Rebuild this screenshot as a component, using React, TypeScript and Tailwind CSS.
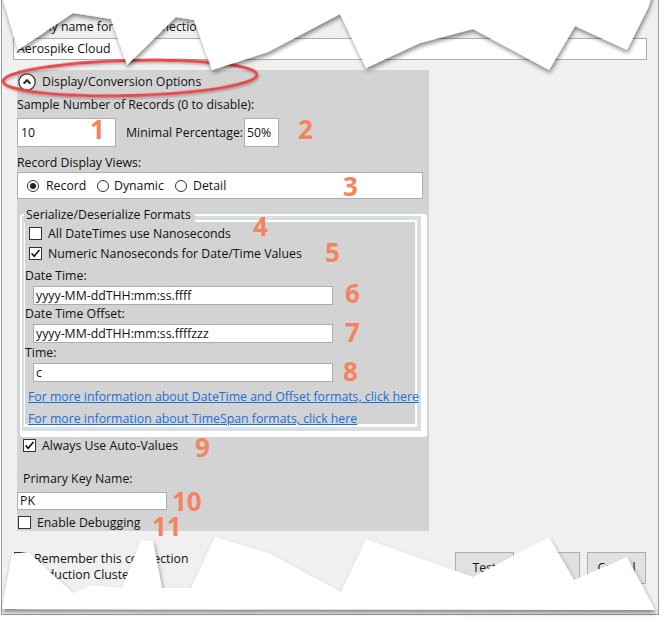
import React from "react";

const Check = ({ checked, className = "" }: { checked?: boolean; className?: string }) => (
  <span className={`flex h-[13px] w-[13px] shrink-0 items-center justify-center border border-[#333] bg-white ${className}`}>
    {checked && (
      <svg width="11" height="11" viewBox="0 0 11 11">
        <path d="M1.6 5.4 L4.2 8.2 L9.4 2" fill="none" stroke="#111" strokeWidth="1.6" />
      </svg>
    )}
  </span>
);

const Radio = ({ checked }: { checked?: boolean }) => (
  <span className="flex h-[12px] w-[12px] shrink-0 items-center justify-center rounded-full border border-[#333] bg-white">
    {checked && <span className="h-[6px] w-[6px] rounded-full bg-[#222]" />}
  </span>
);

const TextBox = ({ value, className = "" }: { value: string; className?: string }) => (
  <div className={`flex items-center border border-[#abadb3] bg-white ${className}`}>{value}</div>
);

// orange callout numbers drawn over the dialog
const CALLOUTS = [
  { n: "1", left: 90, top: 119 },
  { n: "2", left: 298, top: 119 },
  { n: "3", left: 343, top: 176 },
  { n: "4", left: 253, top: 216 },
  { n: "5", left: 325, top: 242 },
  { n: "6", left: 345, top: 283 },
  { n: "7", left: 345, top: 322 },
  { n: "8", left: 343, top: 361 },
  { n: "9", left: 195, top: 437 },
  { n: "10", left: 172, top: 491 },
  { n: "11", left: 152, top: 516 },
];

export default function App() {
  return (
    <div className="relative h-[619px] w-[660px] overflow-hidden bg-white font-['Open_Sans',sans-serif] text-[12.3px] leading-[14px] text-[#111]">
      {/* WINDOW */}
      <div className="ml-px flex h-[615px] w-[658px] flex-col border-x border-b border-[#9b9b9b] bg-[#f0f0f0]">
        <div className="ml-[10px] mt-[20px] h-[14px]">Friendly name for this connection</div>
        <TextBox value="Aerospike Cloud" className="ml-[11px] mt-[4px] h-[22px] w-[634px] pl-[3px]" />

        {/* OPTIONS PANEL */}
        <div className="ml-[15px] mt-[10px] flex h-[461px] w-[412px] flex-col bg-[#d3d3d3]">
          <div className="mt-[2px] flex h-[20px] items-center">
            <svg className="ml-[1px]" width="18" height="18" viewBox="0 0 18 18">
              <circle cx="9" cy="9" r="8.2" fill="#fff" stroke="#3a3a3a" strokeWidth="1.3" />
              <path d="M5.6 10.6 L9 7.2 L12.4 10.6" fill="none" stroke="#222" strokeWidth="2" />
            </svg>
            <span className="ml-[6px]">Display/Conversion Options</span>
          </div>

          <div className="mt-[6px] h-[14px]">Sample Number of Records (0 to disable):</div>
          <div className="mt-[6px] flex h-[29px] items-center">
            <TextBox value="10" className="h-[29px] w-[99px] pl-[3px]" />
            <span className="ml-[10px] w-[118px]">Minimal Percentage:</span>
            <TextBox value="50%" className="h-[29px] w-[35px] pl-[2px]" />
          </div>

          <div className="mt-[9px] h-[14px]">Record Display Views:</div>
          <div className="mt-[2px] flex h-[27px] w-[406px] items-center border border-[#abadb3] bg-white pl-[9px]">
            <div className="flex w-[70px] items-center">
              <Radio checked />
              <span className="ml-[7px]">Record</span>
            </div>
            <div className="flex w-[78px] items-center">
              <Radio />
              <span className="ml-[5px]">Dynamic</span>
            </div>
            <div className="flex items-center">
              <Radio />
              <span className="ml-[6px]">Detail</span>
            </div>
          </div>

          {/* GROUPBOX */}
          <div className="relative ml-[3px] mt-[15px] h-[223px] w-[407px]">
            <div className="absolute left-[4px] top-[-7px] z-10 h-[16px] bg-[#d3d3d3] pl-[2px] pr-[4px] leading-[16px]">
              Serialize/Deserialize Formats
            </div>
            <div className="h-full rounded-[3px] border-b-[6px] border-l-2 border-r-[6px] border-t-2 border-white">
              <div className="h-full rounded-[2px] border-b-4 border-l-2 border-r-4 border-t-4 border-[#d5dfe5]">
                <div className="flex h-full flex-col border-b-[3px] border-l border-r-2 border-t-2 border-white bg-[#d3d3d3]">
                  <div className="ml-[4px] mt-[5px] flex h-[13px] items-center">
                    <Check />
                    <span className="ml-[6px]">All DateTimes use Nanoseconds</span>
                  </div>
                  <div className="ml-[4px] mt-[7px] flex h-[13px] items-center">
                    <Check checked />
                    <span className="ml-[6px]">Numeric Nanoseconds for Date/Time Values</span>
                  </div>
                  <div className="mt-[9px] h-[14px]">Date Time:</div>
                  <TextBox value="yyyy-MM-ddTHH:mm:ss.ffff" className="ml-[8px] mt-[3px] h-[19px] w-[300px] shrink-0 pl-[2px]" />
                  <div className="mt-[2px] h-[14px]">Date Time Offset:</div>
                  <TextBox value="yyyy-MM-ddTHH:mm:ss.ffffzzz" className="ml-[8px] mt-[3px] h-[19px] w-[300px] shrink-0 pl-[2px]" />
                  <div className="mt-[3px] h-[14px]">Time:</div>
                  <TextBox value="c" className="ml-[8px] mt-[3px] h-[19px] w-[300px] shrink-0 pl-[2px]" />
                  <a className="ml-[3px] mt-[8px] h-[14px] shrink-0 whitespace-nowrap text-[#1b6fd6] underline">
                    For more information about DateTime and Offset formats, click here
                  </a>
                  <a className="ml-[3px] mt-[8px] h-[14px] shrink-0 whitespace-nowrap text-[#1b6fd6] underline">
                    For more information about TimeSpan formats, click here
                  </a>
                </div>
              </div>
            </div>
          </div>

          <div className="ml-[6px] mt-[2px] flex h-[13px] items-center">
            <Check checked />
            <span className="ml-[6px]">Always Use Auto-Values</span>
          </div>
          <div className="ml-[6px] mt-[20px] h-[14px]">Primary Key Name:</div>
          <TextBox value="PK" className="mt-[6px] h-[18px] w-[150px] pl-[2px]" />
          <div className="ml-[1px] mt-[6px] flex h-[13px] items-center">
            <Check />
            <span className="ml-[6px]">Enable Debugging</span>
          </div>
        </div>

        {/* FOOTER */}
        <div className="mt-[21px] flex">
          <div className="ml-[12px] flex flex-col">
            <div className="flex h-[13px] items-center">
              <Check />
              <span className="ml-[7px]">Remember this connection</span>
            </div>
            <div className="ml-[13px] mt-[3px] h-[14px]">Production Cluster</div>
          </div>
          <div className="ml-auto mr-[12px] flex gap-[7px]">
            {["Test", "OK", "Cancel"].map((b) => (
              <div key={b} className="flex h-[32px] w-[59px] items-center justify-center border border-[#adadad] bg-[#e1e1e1]">
                {b}
              </div>
            ))}
          </div>
        </div>
      </div>

      {/* CALLOUT NUMBERS */}
      {CALLOUTS.map((c) => (
        <span
          key={c.n}
          className="absolute text-[26px] font-bold leading-[20px] text-[#f4845f]"
          style={{ left: c.left, top: c.top }}
        >
          {c.n}
        </span>
      ))}

      {/* TORN EDGES + HIGHLIGHT RING */}
      <svg className="pointer-events-none absolute inset-0" width="660" height="619" viewBox="0 0 660 619">
        <defs>
          <filter id="tear" x="-5%" y="-30%" width="110%" height="160%">
            <feDropShadow dx="1" dy="3" stdDeviation="2" floodColor="#000" floodOpacity="0.45" />
          </filter>
          <filter id="ring" x="-5%" y="-30%" width="110%" height="160%">
            <feDropShadow dx="1" dy="1.5" stdDeviation="1" floodColor="#000" floodOpacity="0.3" />
          </filter>
        </defs>
        <ellipse
          cx="130"
          cy="78"
          rx="127"
          ry="17.5"
          transform="rotate(-1.5 130 78)"
          fill="none"
          stroke="#e8464b"
          strokeWidth="2.8"
          filter="url(#ring)"
        />
        <polygon
          points="3,-10 3,0 18,50 73,13 111,19 127,65 176,17 194,20 212,70 268,52 340,14 366,68 420,43 473,29 549,70 575,26 627,50 648,8 654,-10"
          fill="#fff"
          filter="url(#tear)"
        />
        <polygon
          points="2,609 12,554 28,552 73,593 92,585 122,588 141,540 153,541 162,588 191,588 215,537 269,553 341,592 366,539 473,577 549,537 574,580 627,557 655,610"
          fill="#fff"
          filter="url(#tear)"
        />
      </svg>
    </div>
  );
}
